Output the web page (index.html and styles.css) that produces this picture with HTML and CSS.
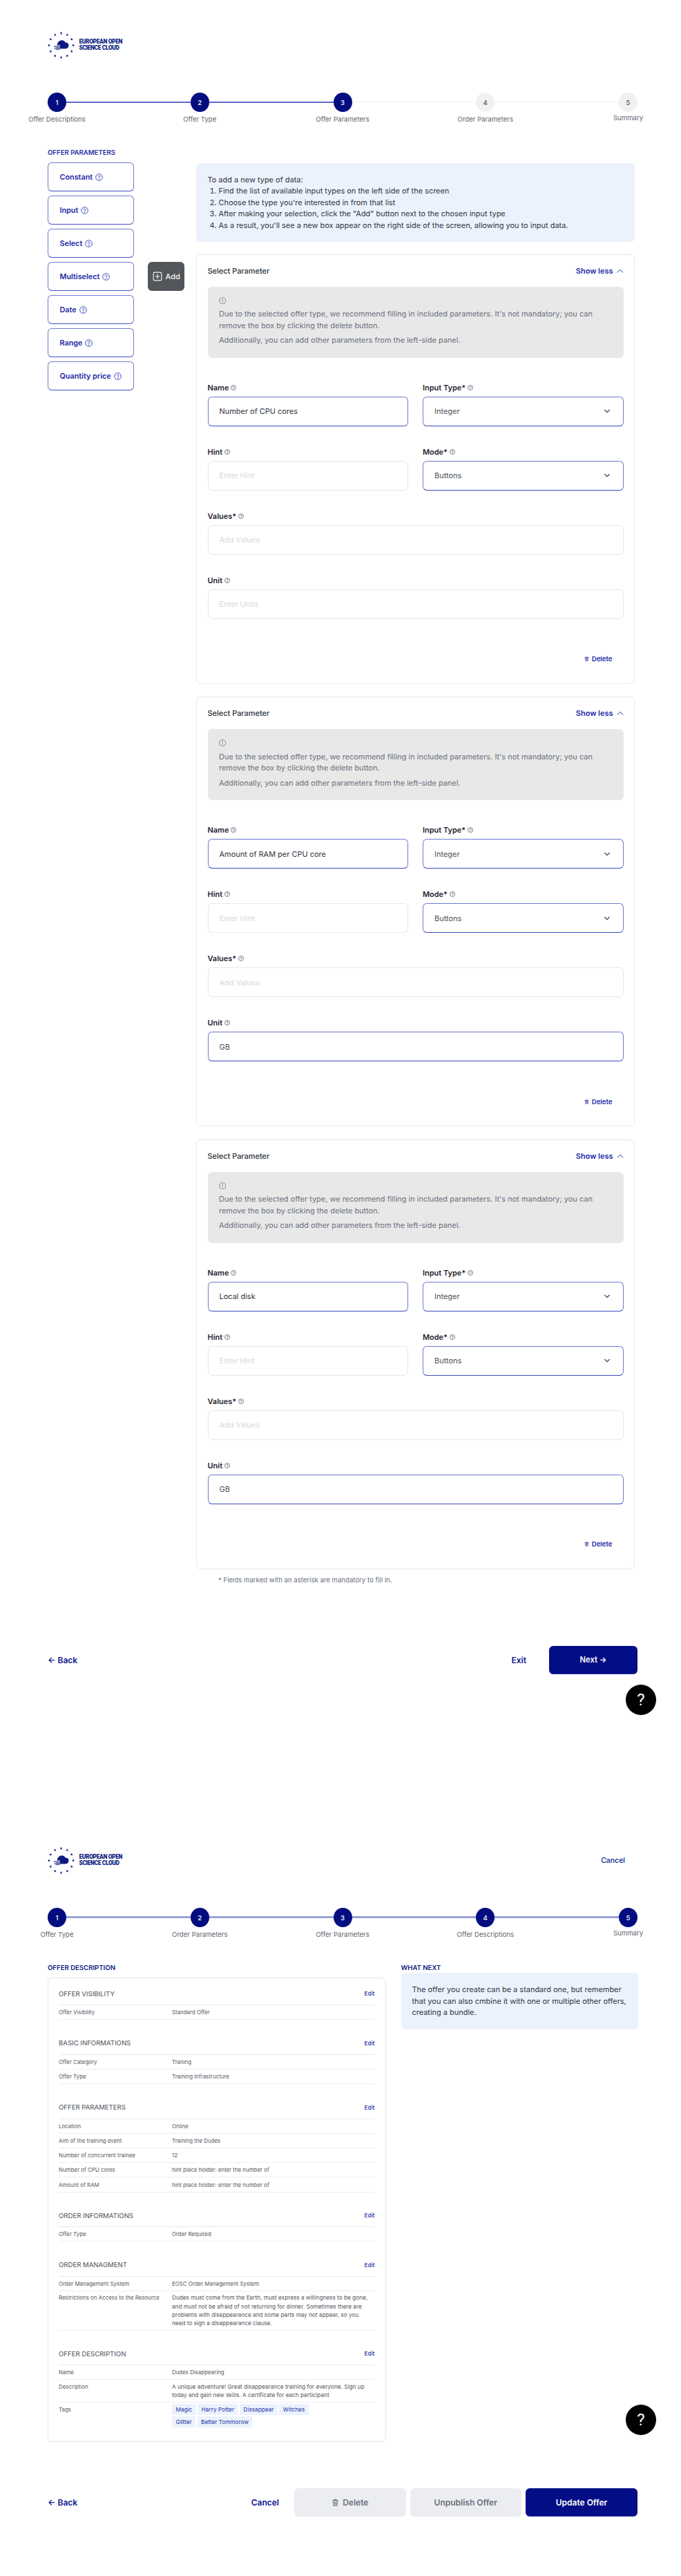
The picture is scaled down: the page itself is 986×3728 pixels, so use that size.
FILE: index.html
```html
<!DOCTYPE html>
<html lang="en">
<head>
<meta charset="utf-8">
<title>Offer wizard</title>
<link rel="stylesheet" href="styles.css">
</head>
<body>
<svg class="defs" width="0" height="0" aria-hidden="true">
  <defs>
    <symbol id="i-help" viewBox="0 0 24 24"><circle cx="12" cy="12" r="10.5" fill="none" stroke="currentColor" stroke-width="2"/><path d="M8.8 9.2a3.3 3.3 0 0 1 6.4 1c0 2.2-3.2 2.6-3.2 4.4" fill="none" stroke="currentColor" stroke-width="2" stroke-linecap="round"/><circle cx="12" cy="17.8" r="1.2" fill="currentColor"/></symbol>
    <symbol id="i-info" viewBox="0 0 24 24"><circle cx="12" cy="12" r="10.5" fill="none" stroke="currentColor" stroke-width="1.8"/><path d="M12 7v6.5" stroke="currentColor" stroke-width="1.8" stroke-linecap="round"/><circle cx="12" cy="17" r="1.2" fill="currentColor"/></symbol>
    <symbol id="i-down" viewBox="0 0 24 24"><path d="M4 8l8 8 8-8" fill="none" stroke="currentColor" stroke-width="2.8" stroke-linecap="round" stroke-linejoin="round"/></symbol>
    <symbol id="i-up" viewBox="0 0 24 24"><path d="M3 17l9-9 9 9" fill="none" stroke="currentColor" stroke-width="2.4" stroke-linecap="round" stroke-linejoin="round"/></symbol>
    <symbol id="i-add" viewBox="0 0 24 24"><rect x="2" y="2" width="20" height="20" rx="2.5" fill="none" stroke="currentColor" stroke-width="2"/><path d="M12 7v10M7 12h10" stroke="currentColor" stroke-width="2" stroke-linecap="round"/></symbol>
    <symbol id="i-trash" viewBox="0 0 24 24"><path d="M3 6h18M9 6V3h6v3M5.5 6l1 15.5h11l1-15.5M10 10.5v7M14 10.5v7" fill="none" stroke="currentColor" stroke-width="2.4" stroke-linecap="round" stroke-linejoin="round"/></symbol>
    <symbol id="i-star" viewBox="0 0 10 10"><path d="M5 0l1.400 3.300H10L7.200 5.600 8.200 10 5 7.500 1.800 10l1-4.400L0 3.300h3.600z" fill="currentColor"/></symbol>
    <symbol id="i-logo" viewBox="0 0 40 40">
      <use href="#i-star" x="18" y="0" width="4" height="4"/><use href="#i-star" x="27" y="2.400" width="4" height="4"/><use href="#i-star" x="33.600" y="9" width="4" height="4"/><use href="#i-star" x="36" y="18" width="4" height="4"/><use href="#i-star" x="33.600" y="27" width="4" height="4"/><use href="#i-star" x="27" y="33.600" width="4" height="4"/><use href="#i-star" x="18" y="36" width="4" height="4"/><use href="#i-star" x="9" y="33.600" width="4" height="4"/><use href="#i-star" x="2.400" y="27" width="4" height="4"/><use href="#i-star" x="0" y="18" width="4" height="4"/><use href="#i-star" x="2.400" y="9" width="4" height="4"/><use href="#i-star" x="9" y="2.400" width="4" height="4"/>
      <path d="M14 20c.6-4.500 3.600-7.500 7-7.500 2.600 0 4.600 1.500 5.400 3.600 2.600-.5 4.900 1.400 4.900 4.100 0 2.700-2 4.800-4.600 4.800H16.500c1.800-.4 3-.9 3-.9H11.500v-1.100h7v-1H9v-1.100h9.500v-.9z" fill="currentColor"/>
      <path d="M9.500 24.800h8.500M12 26.300h6" stroke="currentColor" stroke-width=".8"/>
    </symbol>
  </defs>
</svg>

<section class="page page-edit">
  <header class="top">
    <div class="logo">
      <svg class="logo-mark"><use href="#i-logo"/></svg>
      <div class="logo-text">EUROPEAN OPEN<br>SCIENCE CLOUD</div>
    </div>
  </header>

  <ol class="stepper">
    <li class="step done"><span class="dot">1</span><span class="step-label">Offer Descriptions</span></li>
    <li class="link done"></li>
    <li class="step done"><span class="dot">2</span><span class="step-label">Offer Type</span></li>
    <li class="link done"></li>
    <li class="step done"><span class="dot">3</span><span class="step-label">Offer Parameters</span></li>
    <li class="link"></li>
    <li class="step"><span class="dot">4</span><span class="step-label">Order Parameters</span></li>
    <li class="link"></li>
    <li class="step step-last"><span class="dot">5</span><span class="step-label">Summary</span></li>
  </ol>

  <main class="builder">
    <aside class="palette">
      <h2 class="section-title">OFFER PARAMETERS</h2>
      <div class="palette-grid">
        <button class="type-btn">Constant <svg class="ic-help"><use href="#i-help"/></svg></button>
        <button class="type-btn">Input <svg class="ic-help"><use href="#i-help"/></svg></button>
        <button class="type-btn">Select <svg class="ic-help"><use href="#i-help"/></svg></button>
        <button class="type-btn">Multiselect <svg class="ic-help"><use href="#i-help"/></svg></button>
        <button class="add-btn"><svg class="ic-add"><use href="#i-add"/></svg>Add</button>
        <button class="type-btn">Date <svg class="ic-help"><use href="#i-help"/></svg></button>
        <button class="type-btn">Range <svg class="ic-help"><use href="#i-help"/></svg></button>
        <button class="type-btn">Quantity price <svg class="ic-help"><use href="#i-help"/></svg></button>
      </div>
    </aside>

    <div class="builder-main">
      <div class="note">
        <p>To add a new type of data:</p>
        <ol>
          <li>Find the list of available input types on the left side of the screen</li>
          <li>Choose the type you're interested in from that list</li>
          <li>After making your selection, click the "Add" button next to the chosen input type</li>
          <li>As a result, you'll see a new box appear on the right side of the screen, allowing you to input data.</li>
        </ol>
      </div>

      <article class="param-card">
        <div class="param-head"><span>Select Parameter</span><a class="show-less">Show less <svg class="ic-up"><use href="#i-up"/></svg></a></div>
        <div class="notice">
          <svg class="ic-info"><use href="#i-info"/></svg>
          <p>Due to the selected offer type, we recommend filling in included parameters. It's not mandatory; you can remove the box by clicking the delete button.</p>
          <p class="notice-extra">Additionally, you can add other parameters from the left-side panel.</p>
        </div>
        <div class="fields">
          <div class="field"><label>Name <svg class="ic-tip"><use href="#i-help"/></svg></label><div class="control filled dark">Number of CPU cores</div></div>
          <div class="field"><label>Input Type* <svg class="ic-tip"><use href="#i-help"/></svg></label><div class="control filled">Integer<svg class="ic-down"><use href="#i-down"/></svg></div></div>
          <div class="field"><label>Hint <svg class="ic-tip"><use href="#i-help"/></svg></label><div class="control">Enter Hint</div></div>
          <div class="field"><label>Mode* <svg class="ic-tip"><use href="#i-help"/></svg></label><div class="control filled">Buttons<svg class="ic-down"><use href="#i-down"/></svg></div></div>
          <div class="field wide"><label>Values* <svg class="ic-tip"><use href="#i-help"/></svg></label><div class="control">Add Values</div></div>
          <div class="field wide"><label>Unit <svg class="ic-tip"><use href="#i-help"/></svg></label><div class="control">Enter Units</div></div>
        </div>
        <div class="param-foot"><a class="delete-link"><svg class="ic-trash"><use href="#i-trash"/></svg>Delete</a></div>
      </article>

      <article class="param-card">
        <div class="param-head"><span>Select Parameter</span><a class="show-less">Show less <svg class="ic-up"><use href="#i-up"/></svg></a></div>
        <div class="notice">
          <svg class="ic-info"><use href="#i-info"/></svg>
          <p>Due to the selected offer type, we recommend filling in included parameters. It's not mandatory; you can remove the box by clicking the delete button.</p>
          <p class="notice-extra">Additionally, you can add other parameters from the left-side panel.</p>
        </div>
        <div class="fields">
          <div class="field"><label>Name <svg class="ic-tip"><use href="#i-help"/></svg></label><div class="control filled dark">Amount of RAM per CPU core</div></div>
          <div class="field"><label>Input Type* <svg class="ic-tip"><use href="#i-help"/></svg></label><div class="control filled">Integer<svg class="ic-down"><use href="#i-down"/></svg></div></div>
          <div class="field"><label>Hint <svg class="ic-tip"><use href="#i-help"/></svg></label><div class="control">Enter Hint</div></div>
          <div class="field"><label>Mode* <svg class="ic-tip"><use href="#i-help"/></svg></label><div class="control filled">Buttons<svg class="ic-down"><use href="#i-down"/></svg></div></div>
          <div class="field wide"><label>Values* <svg class="ic-tip"><use href="#i-help"/></svg></label><div class="control">Add Values</div></div>
          <div class="field wide"><label>Unit <svg class="ic-tip"><use href="#i-help"/></svg></label><div class="control filled">GB</div></div>
        </div>
        <div class="param-foot"><a class="delete-link"><svg class="ic-trash"><use href="#i-trash"/></svg>Delete</a></div>
      </article>

      <article class="param-card">
        <div class="param-head"><span>Select Parameter</span><a class="show-less">Show less <svg class="ic-up"><use href="#i-up"/></svg></a></div>
        <div class="notice">
          <svg class="ic-info"><use href="#i-info"/></svg>
          <p>Due to the selected offer type, we recommend filling in included parameters. It's not mandatory; you can remove the box by clicking the delete button.</p>
          <p class="notice-extra">Additionally, you can add other parameters from the left-side panel.</p>
        </div>
        <div class="fields">
          <div class="field"><label>Name <svg class="ic-tip"><use href="#i-help"/></svg></label><div class="control filled dark">Local disk</div></div>
          <div class="field"><label>Input Type* <svg class="ic-tip"><use href="#i-help"/></svg></label><div class="control filled">Integer<svg class="ic-down"><use href="#i-down"/></svg></div></div>
          <div class="field"><label>Hint <svg class="ic-tip"><use href="#i-help"/></svg></label><div class="control">Enter Hint</div></div>
          <div class="field"><label>Mode* <svg class="ic-tip"><use href="#i-help"/></svg></label><div class="control filled">Buttons<svg class="ic-down"><use href="#i-down"/></svg></div></div>
          <div class="field wide"><label>Values* <svg class="ic-tip"><use href="#i-help"/></svg></label><div class="control">Add Values</div></div>
          <div class="field wide"><label>Unit <svg class="ic-tip"><use href="#i-help"/></svg></label><div class="control filled">GB</div></div>
        </div>
        <div class="param-foot"><a class="delete-link"><svg class="ic-trash"><use href="#i-trash"/></svg>Delete</a></div>
      </article>

      <p class="footnote">* Fields marked with an asterisk are mandatory to fill in.</p>
    </div>
  </main>

  <footer class="actions">
    <a class="text-btn">← Back</a>
    <div class="actions-right">
      <a class="text-btn">Exit</a>
      <button class="btn btn-primary btn-next">Next →</button>
    </div>
  </footer>
  <button class="help help-edit">?</button>
</section>

<section class="page page-summary">
  <header class="top">
    <div class="logo">
      <svg class="logo-mark"><use href="#i-logo"/></svg>
      <div class="logo-text">EUROPEAN OPEN<br>SCIENCE CLOUD</div>
    </div>
    <a class="top-cancel">Cancel</a>
  </header>

  <ol class="stepper stepper-full">
    <li class="step done"><span class="dot">1</span><span class="step-label">Offer Type</span></li>
    <li class="link done"></li>
    <li class="step done"><span class="dot">2</span><span class="step-label">Order Parameters</span></li>
    <li class="link done"></li>
    <li class="step done"><span class="dot">3</span><span class="step-label">Offer Parameters</span></li>
    <li class="link done"></li>
    <li class="step done"><span class="dot">4</span><span class="step-label">Offer Descriptions</span></li>
    <li class="link done"></li>
    <li class="step done step-last"><span class="dot">5</span><span class="step-label">Summary</span></li>
  </ol>

  <main class="summary">
    <div>
      <h2 class="section-title dark">OFFER DESCRIPTION</h2>
      <div class="summary-card">
        <section class="group">
          <div class="group-head"><h3>OFFER VISIBILITY</h3><a>Edit</a></div>
          <dl class="row"><dt>Offer Visibility</dt><dd>Standard Offer</dd></dl>
        </section>
        <section class="group">
          <div class="group-head"><h3>BASIC INFORMATIONS</h3><a>Edit</a></div>
          <dl class="row"><dt>Offer Category</dt><dd>Traning</dd></dl>
          <dl class="row"><dt>Offer Type</dt><dd>Training Infrastructure</dd></dl>
        </section>
        <section class="group">
          <div class="group-head"><h3>OFFER PARAMETERS</h3><a>Edit</a></div>
          <dl class="row"><dt>Location</dt><dd>Online</dd></dl>
          <dl class="row"><dt>Aim of the training event</dt><dd>Training the Dudes</dd></dl>
          <dl class="row"><dt>Number of concurrent trainee</dt><dd>12</dd></dl>
          <dl class="row"><dt>Number of CPU cores</dt><dd>hint place holder: enter the number of</dd></dl>
          <dl class="row"><dt>Amount of RAM</dt><dd>hint place holder: enter the number of</dd></dl>
        </section>
        <section class="group">
          <div class="group-head"><h3>ORDER INFORMATIONS</h3><a>Edit</a></div>
          <dl class="row"><dt>Offer Type</dt><dd>Order Required</dd></dl>
        </section>
        <section class="group">
          <div class="group-head"><h3>ORDER MANAGMENT</h3><a>Edit</a></div>
          <dl class="row"><dt>Order Management System</dt><dd>EOSC Order Management System</dd></dl>
          <dl class="row multi"><dt>Restrictions on Access to the Resource</dt><dd>Dudes must come from the Earth, must express a willingness to be gone, and must not be afraid of not returning for dinner. Sometimes there are problems with disappearance and some parts may not appear, so you need to sign a disappearance clause.</dd></dl>
        </section>
        <section class="group">
          <div class="group-head"><h3>OFFER DESCRIPTION</h3><a>Edit</a></div>
          <dl class="row"><dt>Name</dt><dd>Dudes Disappearing</dd></dl>
          <dl class="row multi"><dt>Description</dt><dd>A unique adventure! Great disappearance training for everyone. Sign up today and gain new skills. A certificate for each participant</dd></dl>
          <dl class="row row-tags"><dt>Tags</dt><dd class="tags"><span>Magic</span><span>Harry Potter</span><span>Dissappear</span><span>Witches</span><span>Glitter</span><span>Better Tommorow</span></dd></dl>
        </section>
      </div>
    </div>
    <div>
      <h2 class="section-title dark">WHAT NEXT</h2>
      <div class="note note-next">The offer you create can be a standard one, but remember that you can also cmbine it with one or multiple other offers, creating a bundle.</div>
    </div>
  </main>

  <footer class="actions actions-summary">
    <a class="text-btn">← Back</a>
    <div class="actions-right">
      <a class="text-btn cancel">Cancel</a>
      <button class="btn btn-muted"><svg class="ic-trash-lg"><use href="#i-trash"/></svg>Delete</button>
      <button class="btn btn-muted">Unpublish Offer</button>
      <button class="btn btn-primary">Update Offer</button>
    </div>
  </footer>
  <button class="help help-summary">?</button>
</section>
</body>
</html>
```
FILE: styles.css
```css
* { box-sizing: border-box; }
html, body { margin: 0; padding: 0; background: #fff; }
body { font-family: Inter, "Liberation Sans", sans-serif; font-size: 10.960px; color: #1f2937; }
.defs { position: absolute; }
button { font-family: inherit; cursor: pointer; }
p, ol, h2, h3, dl, dd { margin: 0; padding: 0; }

.page { position: relative; padding: 45px 63px 0 69px; }
.page-edit { height: 2627px; }
.page-summary { height: 1101px; }

.top { display: flex; justify-content: space-between; align-items: center; height: 40px; padding-right: 18px; }
.logo { display: flex; align-items: center; gap: 6.500px; color: #0c1a80; }
.logo-mark { width: 39px; height: 39px; }
.logo-text { font-family: Roboto, sans-serif; font-weight: 900; font-size: 8.400px; line-height: 9.300px; letter-spacing: -0.35px; }
.top-cancel { font-size: 10.500px; font-weight: 500; color: #0b1a8c; }

.stepper { list-style: none; display: flex; align-items: flex-start; margin-top: 49px; height: 56px; }
.step { position: relative; flex: none; width: 27px; display: flex; flex-direction: column; align-items: center; }
.dot { width: 27px; height: 28px; border-radius: 50%; background: #f1f1f1; color: #4b5563; font-size: 9.600px; font-weight: 500; display: flex; align-items: center; justify-content: center; flex: none; }
.step.done .dot { background: #030d80; color: #fff; }
.step-label { margin-top: 5px; line-height: 12px; font-size: 9.600px; color: #5f6670; white-space: nowrap; }
.step-last .step-label { margin-top: 3px; }
.link { flex: 1; height: 1px; margin-top: 13px; background: #f0f0f0; }
.link.done { height: 1.500px; background: #5d68b8; }
.stepper-full .link.done { height: 3px; margin-top: 12px; background: #9aa1d4; }

.section-title { font-size: 9.600px; line-height: 14px; font-weight: 600; color: #1d2ca3; white-space: nowrap; }
.section-title.dark { color: #0c1a80; }

.builder { display: grid; grid-template-columns: 197px 1fr; gap: 18px; margin-top: 24px; margin-right: 4px; }
.palette-grid { display: grid; grid-template-columns: 125px 53px; column-gap: 20px; row-gap: 6px; grid-auto-rows: 42px; margin-top: 7px; }
.palette-grid .type-btn { grid-column: 1; }
.type-btn { display: flex; align-items: center; gap: 4px; padding: 0 16.500px; background: #fff; border: 1px solid #6f7acf; border-bottom-color: #4351bf; border-radius: 6px; color: #1a2aa6; font-size: 10.800px; font-weight: 600; white-space: nowrap; }
.ic-help { width: 11px; height: 11px; color: #2838a8; flex: none; }
.add-btn { grid-column: 2; grid-row: 4; display: flex; align-items: center; gap: 5px; padding: 0 6.500px; background: #53565b; color: #f4f4f4; border: 0; border-radius: 6px; font-size: 10.960px; font-weight: 500; }
.ic-add { width: 14px; height: 14px; flex: none; }

.builder-main { padding-top: 22px; }
.note { background: #ecf2fd; border-radius: 6px; padding: 16px 16.500px; line-height: 16.400px; color: #30343c; }
.note ol { padding-left: 16px; }
.note-next { padding: 16px; height: 82px; line-height: 16.500px; }
.param-card { margin-top: 17.500px; height: 622px; padding: 15px 15.500px 0; border: 1px solid #e8e9ee; border-radius: 6px; background: #fff; }
.param-card + .param-card { margin-top: 18.500px; }
.param-head { display: flex; justify-content: space-between; align-items: center; height: 16px; font-weight: 500; color: #2a2f37; }
.show-less { display: inline-flex; align-items: center; gap: 5px; color: #1a2aa6; font-weight: 600; }
.ic-up { width: 10px; height: 10px; color: #1a2aa6; }
.notice { margin-top: 15px; height: 103px; padding: 15px 16.500px 0; background: #e8e8e8; border-radius: 6px; color: #68707c; line-height: 16.500px; }
.ic-info { display: block; width: 10.500px; height: 10.500px; color: #68707c; margin-bottom: 6px; }
.notice-extra { margin-top: 5px; }
.fields { display: grid; grid-template-columns: 1fr 1fr; column-gap: 21px; row-gap: 30px; margin-top: 36px; }
.field.wide { grid-column: 1 / -1; }
.field label { display: flex; align-items: center; gap: 3px; height: 14px; font-weight: 600; color: #1f2530; }
.ic-tip { width: 8px; height: 8px; color: #3b4150; }
.control { display: flex; align-items: center; justify-content: space-between; height: 43px; margin-top: 6px; padding: 0 16px; border: 1px solid #e5e7eb; border-radius: 6px; color: #d5d8de; }
.control.filled { border-color: #6f7acf; border-bottom-color: #3f4dbd; color: #4a5058; }
.control.dark { color: #2f343c; }
.ic-down { width: 10px; height: 10px; margin-right: 2px; color: #2a2f37; }
.param-foot { display: flex; justify-content: flex-end; margin-top: 51px; padding-right: 16px; }
.delete-link { display: inline-flex; align-items: center; gap: 4px; height: 14px; font-size: 9.600px; font-weight: 600; color: #1a2aa6; }
.ic-trash { width: 7px; height: 9px; }
.footnote { margin-top: 10px; padding-left: 32px; line-height: 12px; font-size: 9.600px; color: #6b7280; }

.actions { display: flex; justify-content: space-between; align-items: center; height: 41px; margin-top: 89px; }
.actions-right { display: flex; align-items: center; }
.text-btn { font-size: 12px; font-weight: 600; color: #0a1690; white-space: nowrap; }
.btn { height: 41px; border: 0; border-radius: 6px; font-size: 12px; font-weight: 600; display: inline-flex; align-items: center; justify-content: center; white-space: nowrap; }
.btn-primary { background: #030d85; color: #fff; width: 161.500px; border-bottom: 1px solid #2a36a8; }
.btn-next { width: 128px; margin-left: 33px; font-size: 11.200px; }
.btn-muted { background: #ecedf1; color: #6a707b; width: 161.500px; margin-right: 6px; }
.ic-trash-lg { width: 11px; height: 13px; margin-right: 5px; }
.cancel { margin-right: 22px; }

.help { position: absolute; width: 44px; height: 44px; right: 36px; border: 0; border-radius: 50%; background: #000; color: #fff; font-family: Roboto, sans-serif; font-size: 24px; font-weight: 400; }
.help-edit { bottom: 145px; }
.help-summary { bottom: 204px; }

.summary { display: grid; grid-template-columns: 489.500px 343px; column-gap: 22px; margin-top: 24px; }
.summary-card { margin-top: 7px; height: 672px; padding: 6px 15px 0; border: 1px solid #e4e6ee; border-radius: 6px; }
.group { margin-bottom: 17.500px; }
.group-head { display: flex; justify-content: space-between; align-items: center; height: 33px; border-bottom: 1px solid #e8eaee; }
.group-head h3 { font-size: 9.600px; font-weight: 400; color: #4b4f57; }
.group-head a { font-size: 8.220px; font-weight: 500; color: #1a2aa6; }
.row { display: grid; grid-template-columns: 164px 1fr; align-items: start; padding: 4.300px 0 3.700px; border-bottom: 1px solid #eceef1; font-size: 7.900px; line-height: 12.200px; color: #555a63; }
.row.multi { padding: 3.500px 0 3.500px; }
.row.multi dd { max-width: 290px; font-size: 8.220px; }
.row-tags { border-bottom: 0; padding: 2px 0 0; }
.row-tags dt { padding-top: 2px; }
.tags { display: flex; flex-wrap: wrap; gap: 2.500px; max-width: 225px; font-size: 8.220px; }
.tags span { height: 16px; padding: 0 5.500px; background: #ecf2fd; color: #2636a8; line-height: 16px; }

.actions-summary { margin-top: 67px; }
.actions-summary .btn-primary { width: 162px; }
```
